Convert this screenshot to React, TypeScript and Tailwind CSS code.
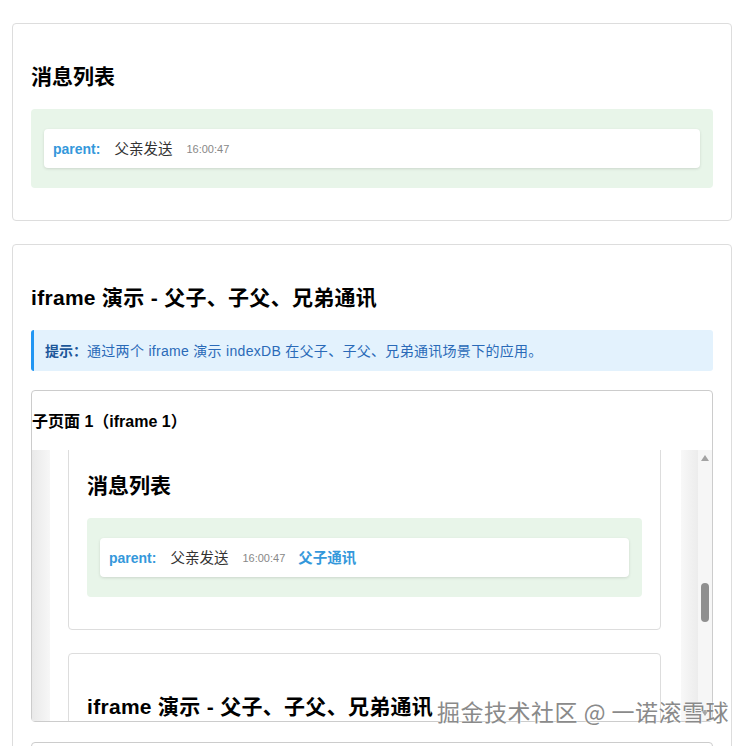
import React from "react";

const FONT = {
  fontFamily: '"Liberation Sans", Arial, "Noto Sans CJK SC", sans-serif',
};

function MessageRow({ tag }: { tag?: string }) {
  return (
    <div className="flex h-[39px] items-center rounded-[4px] bg-white pt-[2px] pl-[9px] shadow-[0_1px_3px_rgba(0,0,0,0.12)]">
      <span className="mr-[14px] text-[14px] font-bold text-[#3498db]">parent:</span>
      <span className="mr-[14px] text-[14.5px] text-[#333]">父亲发送</span>
      <span className="text-[11px] text-[#888]">16:00:47</span>
      {tag && <span className="ml-[13px] text-[14.5px] font-bold text-[#3498db]">{tag}</span>}
    </div>
  );
}

function MessageCard({ tag }: { tag?: string }) {
  return (
    <div className="rounded-[4px] border border-[#ddd] bg-white px-[18px] pt-[39px] pb-[32px]">
      <h2 className="mb-[18px] text-[21px] leading-[28px] font-bold text-black">消息列表</h2>
      <div className="rounded-[4px] bg-[#e8f5e9] px-[13px] py-[20px]">
        <MessageRow tag={tag} />
      </div>
    </div>
  );
}

function DemoTitle() {
  return (
    <h2 className="mb-[18px] text-[21px] leading-[28px] font-bold tracking-[0.3px] text-black">
      iframe 演示 - 父子、子父、兄弟通讯
    </h2>
  );
}

function FramePage() {
  return (
    <div className="flex h-[271px] overflow-hidden">
      <div className="flex min-w-0 flex-1">
        <div className="w-[18px] bg-gradient-to-r from-[#e9e9e9] to-[#f7f7f7]" />
        <div className="flex-1 bg-white pr-[20px] pl-[18px]">
          <div className="-mt-[18px]">
            <MessageCard tag="父子通讯" />
            <div className="mt-[23px] rounded-[4px] border border-[#ddd] bg-white px-[18px] pt-[39px] pb-[32px]">
              <DemoTitle />
            </div>
          </div>
        </div>
        <div className="w-[17px] bg-gradient-to-r from-[#f8f8f8] to-[#ececec]" />
      </div>
      <div className="relative w-[14px] bg-[#f6f6f6]">
        <svg className="absolute top-[5px] left-[3px]" width="8" height="6" viewBox="0 0 8 6">
          <path d="M4 0 L8 6 L0 6 Z" fill="#a3a3a3" />
        </svg>
        <div className="absolute top-[133px] left-[3px] h-[39px] w-[8px] rounded-full bg-[#8f8f8f]" />
        <svg className="absolute bottom-[5px] left-[3px]" width="8" height="6" viewBox="0 0 8 6">
          <path d="M0 0 L8 0 L4 6 Z" fill="#a3a3a3" />
        </svg>
      </div>
    </div>
  );
}

export default function App() {
  return (
    <div className="relative h-[746px] overflow-hidden bg-white" style={FONT}>
      <div className="ml-[12px] w-[720px] pt-[23px]">
        <MessageCard />

        <div className="mt-[23px] rounded-[4px] border border-[#ddd] bg-white px-[18px] pt-[39px] pb-[32px]">
          <DemoTitle />

          <div className="flex h-[41px] items-center rounded-[3px] border-l-[3px] border-[#2196f3] bg-[#e3f2fd] pt-[2px] pl-[11px] text-[14px] text-[#2a6ab8]">
            <span className="font-bold text-[#1d5799]">提示：</span>
            <span className="tracking-[0.3px]">通过两个 iframe 演示 indexDB 在父子、子父、兄弟通讯场景下的应用。</span>
          </div>

          <div className="mt-[19px] rounded-[4px] border border-[#ccc] bg-white pt-[21px]">
            <h3 className="mb-[18px] text-[16px] leading-[20px] font-bold text-black">子页面 1（iframe 1）</h3>
            <FramePage />
          </div>

          <div className="mt-[20px] h-[200px] rounded-[4px] border border-[#ccc] bg-white" />
        </div>
      </div>

      <div
        className="absolute top-[696px] left-[437px] text-[23px] leading-[30px] tracking-[0.5px] whitespace-nowrap text-[#8a8a8a] [text-shadow:0_0_2px_#fff,0_0_1px_#fff]"
        style={{ fontFamily: '"Noto Sans CJK SC", sans-serif' }}
      >
        掘金技术社区 @ 一诺滚雪球
      </div>
    </div>
  );
}
